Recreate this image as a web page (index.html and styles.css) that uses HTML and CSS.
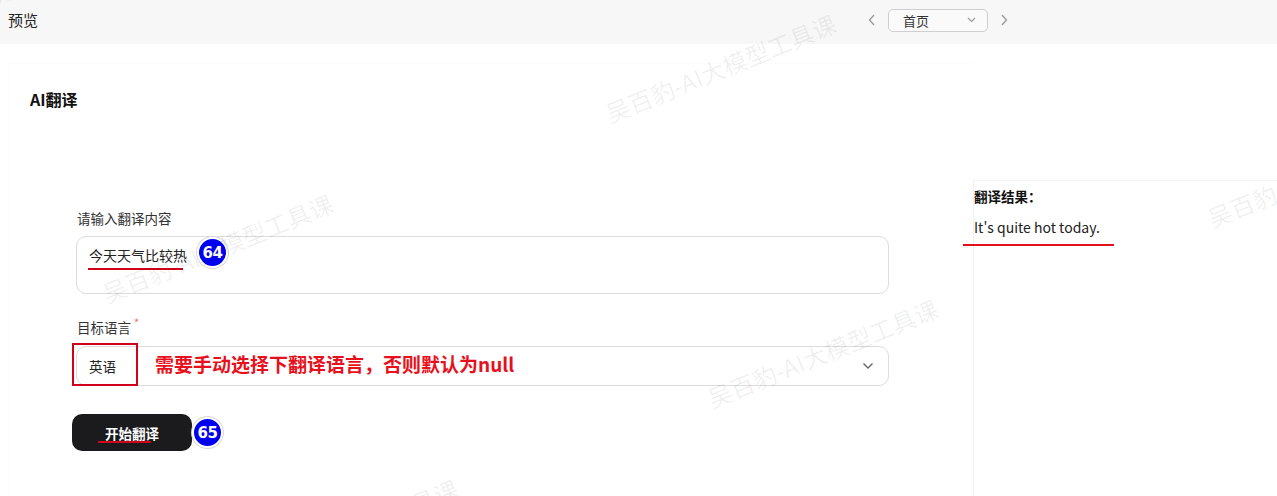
FILE: index.html
```html
<!DOCTYPE html>
<html lang="zh">
<head>
<meta charset="utf-8">
<title>预览</title>
<link rel="stylesheet" href="styles.css">
</head>
<body>
<div class="page">
  <header class="topbar">
    <div class="title">预览</div>
    <nav class="pager">
      <span class="arrow">
        <svg width="10" height="14" viewBox="0 0 10 14"><path d="M7 2 L2.5 7 L7 12" fill="none" stroke="#999" stroke-width="1.3"/></svg>
      </span>
      <div class="page-select">
        <span>首页</span>
        <svg width="9" height="6" viewBox="0 0 9 6"><path d="M1 1 L4.5 4.5 L8 1" fill="none" stroke="#999" stroke-width="1.1"/></svg>
      </div>
      <span class="arrow">
        <svg width="10" height="14" viewBox="0 0 10 14"><path d="M3 2 L7.5 7 L3 12" fill="none" stroke="#999" stroke-width="1.3"/></svg>
      </span>
    </nav>
  </header>

  <main class="content">
    <section class="card">
      <h2 class="card-title">AI翻译</h2>
      <form class="form">
        <div class="field">
          <label class="label">请输入翻译内容</label>
          <div class="textarea">
            今天天气比较热
            <span class="underline u-input"></span>
            <span class="badge b-64">64</span>
          </div>
        </div>
        <div class="field field-lang">
          <label class="label">目标语言<span class="req">*</span></label>
          <div class="select">
            <span>英语</span>
            <svg class="chev" width="12" height="8" viewBox="0 0 12 8"><path d="M1.5 1.5 L6 6 L10.5 1.5" fill="none" stroke="#666" stroke-width="1.4"/></svg>
            <span class="redbox"></span>
            <span class="note">需要手动选择下翻译语言，否则默认为null</span>
          </div>
        </div>
        <div class="actions">
          <button type="button" class="btn">开始翻译<span class="underline u-btn"></span></button>
          <span class="badge b-65">65</span>
        </div>
      </form>
    </section>

    <aside class="result">
      <div class="result-label">翻译结果：</div>
      <div class="result-text">It's quite hot today.<span class="underline u-result"></span></div>
    </aside>
  </main>

  <div class="watermarks" aria-hidden="true">
    <span class="wm" style="left:-5px;top:-22px">吴百豹-AI大模型工具课</span>
    <span class="wm" style="left:613px;top:95px">吴百豹-AI大模型工具课</span>
    <span class="wm" style="left:110px;top:275px">吴百豹-AI大模型工具课</span>
    <span class="wm" style="left:715px;top:380px">吴百豹-AI大模型工具课</span>
    <span class="wm" style="left:1215px;top:200px">吴百豹-AI大模型工具课</span>
    <span class="wm" style="left:235px;top:560px">吴百豹-AI大模型工具课</span>
  </div>
</div>
</body>
</html>
```

FILE: styles.css
```css
* { box-sizing: border-box; }
html, body { margin: 0; padding: 0; }
body {
  font-family: "Noto Sans CJK SC", "Noto Sans", sans-serif;
  color: #222;
  background: #fff;
  width: 1277px;
  height: 496px;
  overflow: hidden;
}
.page { position: relative; height: 496px; overflow: hidden; }

.topbar {
  height: 44px;
  background: #f7f7f7;
  display: flex;
  align-items: center;
  padding-left: 8px;
}
.title { font-size: 15px; color: #222; line-height: 20px; margin-top: -4px; }
.pager {
  display: flex;
  align-items: center;
  margin-left: 829px;
  margin-top: -4px;
}
.arrow { display: flex; width: 10px; justify-content: center; }
.page-select {
  margin: 0 11px 0 11px;
  width: 100px;
  height: 23px;
  border: 1px solid #cfcfcf;
  border-radius: 5px;
  background: #fafafa;
  display: flex;
  align-items: center;
  justify-content: space-between;
  padding: 0 11px 0 14px;
  font-size: 13px;
  color: #333;
}

.content { display: flex; }
.card {
  flex: 0 0 965px;
  margin: 19px 0 0 8px;
  border-top: 1px solid #fcfcfc;
  border-left: 1px solid #fcfcfc;
  height: 433px;
}
.card-title {
  margin: 23px 0 0 21px;
  font-size: 16px;
  line-height: 24px;
  font-weight: 700;
  color: #111;
}
.form { margin: 96px 0 0 67px; width: 813px; }
.field { display: flex; flex-direction: column; }
.label {
  font-size: 13.5px;
  line-height: 22px;
  color: #333;
  padding-left: 1px;
}
.req { color: #f56c6c; font-size: 11px; vertical-align: top; margin-left: 3px; position: relative; top: -5px; }
.textarea {
  position: relative;
  margin-top: 7px;
  height: 58px;
  border: 1px solid #dcdcdc;
  border-radius: 10px;
  padding: 7px 12px;
  font-size: 14px;
  line-height: 22px;
  color: #222;
}
.field-lang { margin-top: 22px; }
.select {
  position: relative;
  margin-top: 8px;
  height: 40px;
  border: 1px solid #dcdcdc;
  border-radius: 10px;
  padding: 0 12px;
  display: flex;
  align-items: center;
  justify-content: space-between;
  font-size: 13.5px;
  color: #222;
}
.chev { margin-right: 2px; }
.redbox {
  position: absolute;
  left: -5px;
  top: -4px;
  width: 66px;
  height: 43px;
  border: 2px solid #d0021b;
}
.note {
  position: absolute;
  left: 78px;
  top: 4px;
  font-size: 19px;
  line-height: 26px;
  font-weight: 700;
  color: #e8101c;
  white-space: nowrap;
}

.actions {
  position: relative;
  margin-top: 28px;
  margin-left: -4px;
  display: flex;
  align-items: center;
}
.btn {
  position: relative;
  width: 120px;
  height: 37px;
  border: none;
  border-radius: 10px;
  background: #1b1b1d;
  color: #fff;
  font-family: inherit;
  font-size: 13.5px;
  font-weight: 700;
  padding: 0;
}

.underline {
  position: absolute;
  height: 2px;
  background: #d0021b;
}
.u-input { left: 11px; top: 31px; width: 95px; }
.u-btn { left: 26px; top: 27px; width: 53px; }
.u-result { left: -11px; top: 27px; width: 151px; background: #e0101c; }

.badge {
  position: absolute;
  width: 31px;
  height: 31px;
  border-radius: 50%;
  background: #0000f0;
  border: 2px solid #fff;
  box-shadow: 0 0 0 1px #d8d8d8;
  color: #fff;
  font-family: "DejaVu Sans", sans-serif;
  font-weight: 700;
  font-size: 15px;
  display: flex;
  align-items: center;
  justify-content: center;
  letter-spacing: -0.5px;
}
.b-64 { left: 120px; top: 0px; }
.b-65 { position: relative; }

.result {
  flex: 1;
  margin-top: 136px;
  border-top: 1px solid #f2f2f2;
  border-left: 1px solid #f0f0f0;
  padding-top: 5px;
  height: 316px;
}
.result-label {
  font-size: 13.5px;
  font-weight: 700;
  line-height: 20px;
  color: #111;
}
.result-text {
  position: relative;
  display: inline-block;
  margin-top: 11px;
  font-size: 14px;
  line-height: 20px;
  color: #222;
}

.watermarks { position: absolute; inset: 0; pointer-events: none; }
.wm {
  position: absolute;
  font-size: 24px;
  color: rgba(0, 0, 0, 0.065);
  white-space: nowrap;
  transform: rotate(-22deg);
  transform-origin: left bottom;
}
```
